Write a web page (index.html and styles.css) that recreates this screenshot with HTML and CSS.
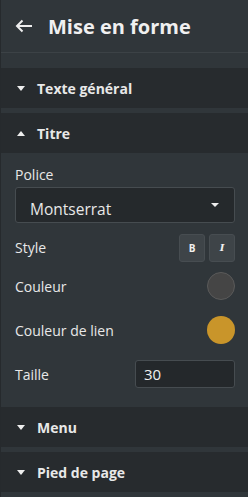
FILE: index.html
```html
<!DOCTYPE html>
<html lang="fr">
  <head>
    <meta charset="UTF-8" />
    <meta name="viewport" content="width=device-width, initial-scale=1.0" />
    <title>Mise en forme</title>
    <link rel="stylesheet" href="styles.css">
  </head>
  <body>
    <div class="panel">
      <header class="top">
        <svg class="back" width="18" height="14" viewBox="0 0 18 14">
          <path d="M17 7H2M7.5 1.5L2 7l5.5 5.5" fill="none" stroke="#eee" stroke-width="2" />
        </svg>
        <h1>Mise en forme</h1>
      </header>

      <div class="section">
        <span class="caret down"></span>
        <span>Texte général</span>
      </div>

      <div class="section">
        <span class="caret up"></span>
        <span>Titre</span>
      </div>

      <div class="body">
        <label class="label">Police</label>
        <div class="select">
          <span>Montserrat</span>
          <span class="caret small"></span>
        </div>

        <div class="row style-row">
          <span>Style</span>
          <div class="btns">
            <button class="fmt bold">B</button>
            <button class="fmt ital">I</button>
          </div>
        </div>

        <div class="row first">
          <span>Couleur</span>
          <span class="swatch dark"></span>
        </div>

        <div class="row">
          <span>Couleur de lien</span>
          <span class="swatch gold"></span>
        </div>

        <div class="row">
          <span>Taille</span>
          <input class="size" type="text" value="30" />
        </div>
      </div>

      <div class="section">
        <span class="caret down"></span>
        <span>Menu</span>
      </div>

      <div class="section">
        <span class="caret down"></span>
        <span>Pied de page</span>
      </div>
    </div>
  </body>
</html>
```

FILE: styles.css
```css
body {
  margin: 0;
  background: #30363a;
  font-family: "Open Sans", Lato, sans-serif;
  color: #e8e8e8;
}
.panel {
  border-left: 1px solid #262a2d;
  min-height: 497px;
  box-sizing: border-box;
}
.top {
  display: flex;
  align-items: center;
  height: 52px;
  padding-left: 14px;
  border-bottom: 1px solid #3c4246;
  margin-bottom: 15px;
}
.back {
  margin-right: 15px;
}
h1 {
  margin: 0;
  font-size: 20px;
  font-weight: 700;
  color: #f0f0f0;
}
.section {
  display: flex;
  align-items: center;
  height: 40px;
  background: #272b2e;
  padding-left: 16px;
  font-weight: 700;
  font-size: 14px;
  margin-bottom: 5px;
}
.caret {
  width: 0;
  height: 0;
  border-left: 4px solid transparent;
  border-right: 4px solid transparent;
  margin-right: 12px;
}
.caret.down {
  border-top: 5px solid #eee;
}
.caret.up {
  border-bottom: 5px solid #eee;
}
.caret.small {
  border-top: 4px solid #eee;
  margin-right: 0;
  margin-top: -8px;
}
.body {
  padding: 13px 13px 19px 14px;
  font-size: 14px;
  margin-top: -5px;
}
.label {
  display: block;
  line-height: 18px;
  margin-bottom: 3px;
}
.select {
  display: flex;
  justify-content: space-between;
  align-items: center;
  height: 36px;
  box-sizing: border-box;
  background: #25292c;
  border: 1px solid #464c50;
  border-radius: 3px;
  padding: 8px 15px 0 14px;
  font-size: 15.5px;
}
.row {
  display: flex;
  justify-content: space-between;
  align-items: center;
  height: 28px;
  margin-top: 16px;
}
.row.style-row {
  margin-top: 10px;
  height: 29px;
}
.row.first {
  margin-top: 10px;
}
.btns {
  display: flex;
  gap: 4px;
}
.fmt {
  width: 26px;
  height: 28px;
  background: #3e4448;
  border: 1px solid #474d51;
  border-radius: 3px;
  color: #f0f0f0;
  font-size: 10px;
  font-weight: 700;
  padding: 0;
  font-family: "Open Sans", sans-serif;
}
.fmt.ital {
  font-style: italic;
  font-family: "DejaVu Serif", serif;
}
.swatch {
  width: 28px;
  height: 28px;
  border-radius: 50%;
  box-sizing: border-box;
}
.swatch.dark {
  background: #454545;
  border: 1px solid #5a5a5a;
}
.swatch.gold {
  background: #c9952a;
}
.size {
  width: 100px;
  height: 28px;
  box-sizing: border-box;
  background: #24282b;
  border: 1px solid #464c50;
  border-radius: 3px;
  color: #f0f0f0;
  font-family: "Open Sans", sans-serif;
  font-size: 15px;
  padding: 0 8px;
}
```
